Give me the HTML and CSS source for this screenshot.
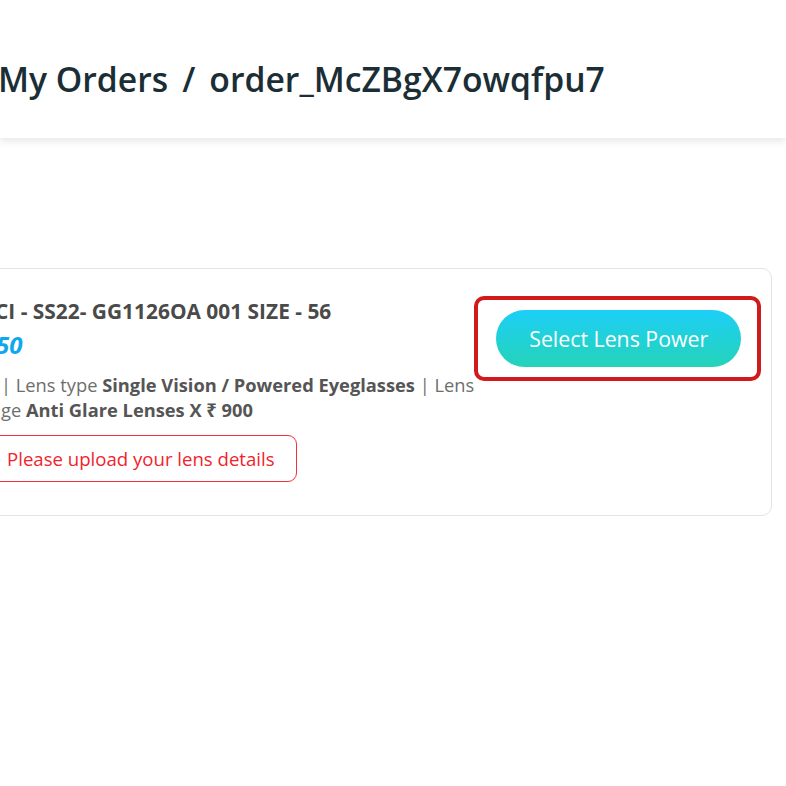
FILE: index.html
```html
<!DOCTYPE html>
<html>
<head>
<meta charset="utf-8">
<link rel="stylesheet" href="styles.css">
</head>
<body>
<header class="topbar">
  <h1 class="crumbs"><span>My Orders</span><span class="sep">/</span><span>order_McZBgX7owqfpu7</span></h1>
</header>
<main class="page">
  <section class="card">
    <div class="info">
      <h2 class="name">CI - SS22- GG1126OA 001 SIZE - 56</h2>
      <div class="price">50</div>
      <p class="desc">| Lens type <b>Single Vision / Powered Eyeglasses</b> | Lens<br>ge <b>Anti Glare Lenses X ₹ 900</b></p>
      <div class="notice">Please upload your lens details</div>
    </div>
    <div class="action">
      <div class="highlight">
        <button class="select-btn">Select Lens Power</button>
      </div>
    </div>
  </section>
</main>
</body>
</html>
```
FILE: styles.css
```css
* { box-sizing: border-box; }
html, body { margin: 0; padding: 0; background: #fff; }
body {
  font-family: "Open Sans", "Noto Sans", sans-serif;
  overflow: hidden;
  width: 786px;
  height: 786px;
}
.topbar {
  height: 138px;
  background: #fff;
  box-shadow: 0 3px 8px rgba(0,0,0,0.10);
  display: flex;
  align-items: center;
  position: relative;
}
.crumbs {
  margin: 22px 0 0 -2px;
  font-size: 33.7px;
  font-weight: 600;
  color: #1b2e35;
  display: flex;
  gap: 14px;
  line-height: 1;
  white-space: nowrap;
}
.page {
  padding-top: 130px;
}
.card {
  margin-left: -40px;
  width: 812px;
  height: 248px;
  border: 1px solid #e3e3e3;
  border-radius: 10px;
  padding: 29px 0 0 40px;
  display: flex;
}
.info { flex: 0 0 473px; }
.name {
  margin: 0 0 0 -6px;
  font-size: 20.9px;
  font-weight: 700;
  color: #4a4a4a;
  line-height: 26px;
  white-space: nowrap;
}
.price {
  margin: 6px 0 0 -5px;
  font-size: 24px;
  font-weight: 700;
  font-style: italic;
  color: #10a8ec;
  line-height: 30px;
}
.desc {
  margin: 12px 0 0;
  font-size: 18.3px;
  line-height: 25px;
  color: #6e6e6e;
  white-space: nowrap;
}
.desc b { color: #555; font-weight: 700; }
.notice {
  margin-top: 13px;
  margin-left: -40px;
  width: 336px;
  height: 47px;
  border: 1px solid #f2323a;
  border-radius: 9px;
  color: #f2232b;
  font-size: 18.6px;
  display: flex;
  align-items: center;
  padding-left: 45px;
}
.action { margin-top: -2px; }
.highlight {
  width: 287px;
  height: 85px;
  border: 4px solid #d11a1c;
  border-radius: 10px;
  display: flex;
  align-items: center;
  justify-content: center;
}
.select-btn {
  width: 245px;
  height: 57px;
  border: none;
  border-radius: 29px;
  background: linear-gradient(180deg, #1dcff7 0%, #24d3b8 100%);
  color: #fff;
  font-family: "Open Sans", "Noto Sans", sans-serif;
  font-size: 21.3px;
  font-weight: 500;
  margin-left: 2px;
  padding: 0;
}
```
